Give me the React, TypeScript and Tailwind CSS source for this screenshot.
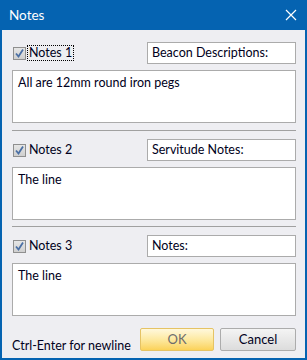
import React from "react";

const font = { fontFamily: 'Lato, "Noto Sans", sans-serif' };

function Check() {
  return (
    <span className="flex h-[13px] w-[13px] items-center justify-center border border-[#8f8f8f] bg-gradient-to-b from-[#e6e6e6] to-[#cfcfcf]">
      <svg width="11" height="11" viewBox="0 0 11 11">
        <path d="M2 5.5 L4.5 8.5 L9 1.5" fill="none" stroke="#4a6fa5" strokeWidth="1.8" />
      </svg>
    </span>
  );
}

function NoteSection({
  label,
  title,
  text,
  focused,
}: {
  label: string;
  title: string;
  text: string;
  focused?: boolean;
}) {
  return (
    <div className="flex flex-col">
      <div className="flex h-[22px] items-center justify-between">
        <div className="flex items-center pl-[1px]">
          <Check />
          <span
            className={
              "ml-[2px] px-[1px] text-[12.5px] leading-[14px] text-[#000020] " +
              (focused ? "outline-1 outline-dotted outline-black" : "outline-none")
            }
          >
            {label}
          </span>
        </div>
        <div className="flex h-[22px] w-[149px] items-center border border-[#ababab] bg-white px-[4px] text-[12.5px] text-[#000020]">
          {title}
        </div>
      </div>
      <div className="mt-[6px] h-[53px] border border-[#ababab] bg-white px-[5px] pt-[3px] text-[12.5px] text-[#000020]">
        {text}
      </div>
    </div>
  );
}

export default function App() {
  return (
    <div className="flex h-[360px] w-[307px] flex-col bg-[#0563b1]" style={font}>
      <div className="flex h-[30px] shrink-0 items-center justify-between pl-[9px] pr-[10px] text-white">
        <span className="text-[13.5px]">Notes</span>
        <svg width="12" height="12" viewBox="0 0 12 12">
          <path d="M1 1 L11 11 M11 1 L1 11" stroke="white" strokeWidth="1.2" />
        </svg>
      </div>
      <div className="mx-[2px] mb-[2px] flex flex-1 flex-col bg-[#eeeef2] pl-[10px] pr-[9px] pt-[12px]">
        <NoteSection
          label="Notes 1"
          title="Beacon Descriptions:"
          text="All are 12mm round iron pegs"
          focused
        />
        <div className="mb-[8px] mt-[7px] h-[1px] bg-[#a0a0a0]" />
        <NoteSection label="Notes 2" title="Servitude Notes:" text="The line" />
        <div className="mb-[8px] mt-[6px] h-[1px] bg-[#a0a0a0]" />
        <NoteSection label="Notes 3" title="Notes:" text="The line" />
        <div className="mt-[7px] flex items-center">
          <span className="mt-[14px] flex-1 text-[12.5px] text-[#000020]">Ctrl-Enter for newline</span>
          <button className="h-[23px] w-[74px] rounded-[2px] border border-[#e5c365] bg-gradient-to-b from-[#fff8dc] via-[#fde9a0] to-[#fbd257] text-[13px] text-[#6d6d6d]">
            OK
          </button>
          <button className="ml-[6px] h-[23px] w-[76px] rounded-[2px] border border-[#acacac] bg-gradient-to-b from-[#f4f4f4] to-[#dcdcdc] text-[13px] text-[#000020]">
            Cancel
          </button>
        </div>
      </div>
    </div>
  );
}
